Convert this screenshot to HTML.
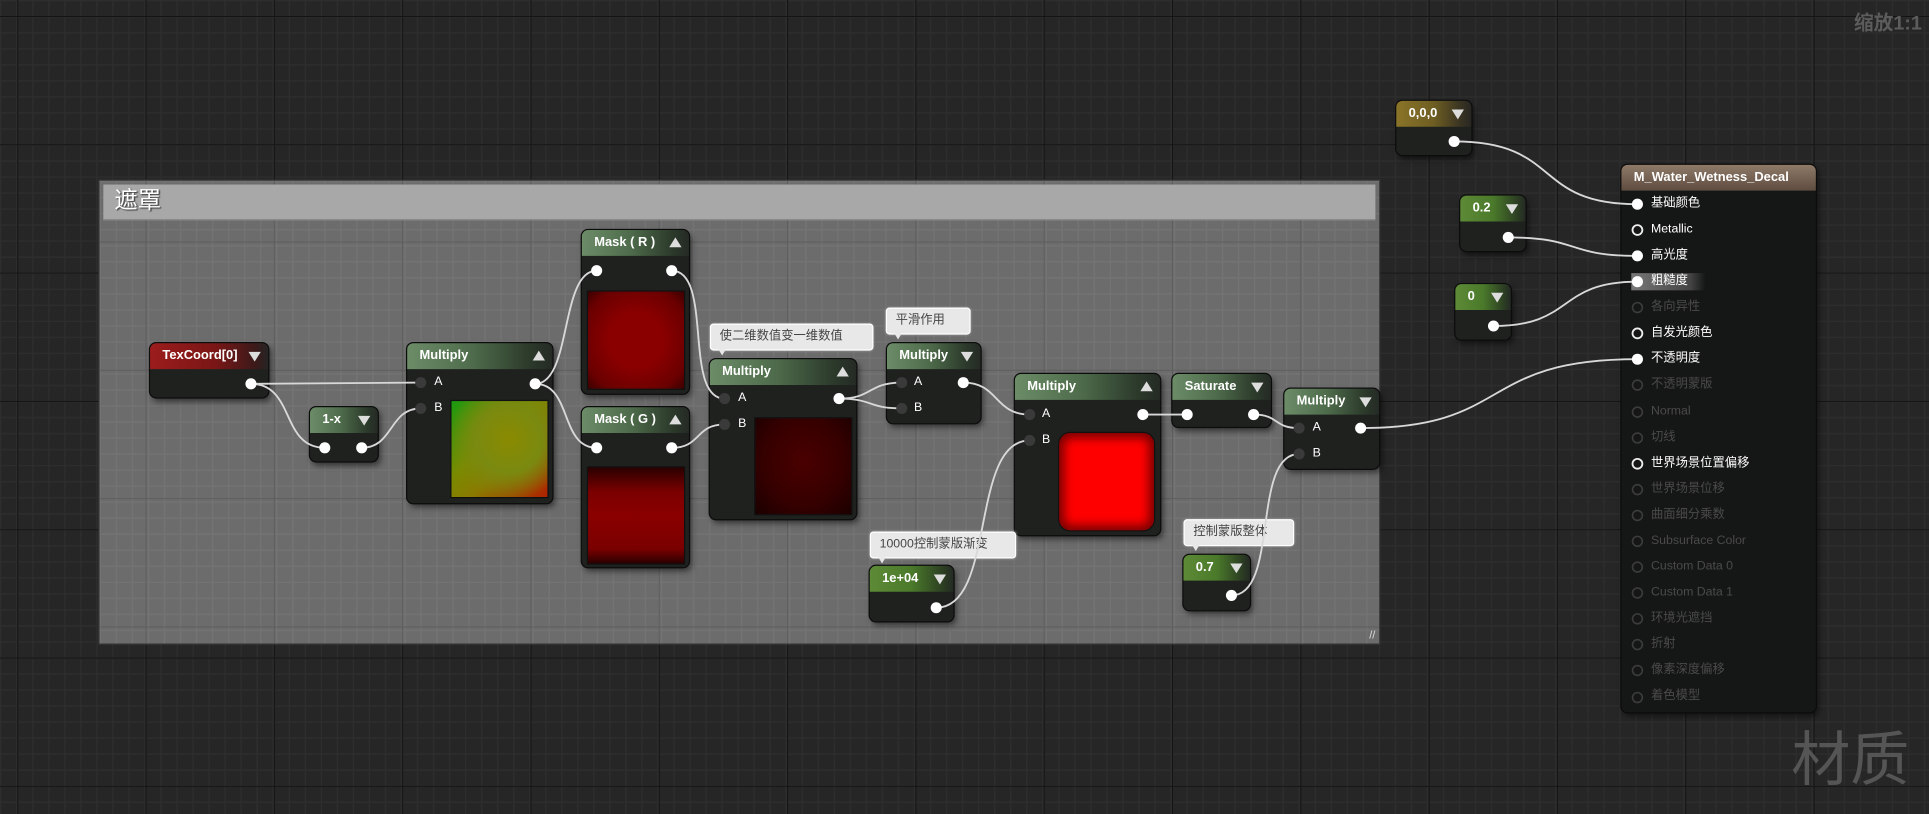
<!DOCTYPE html>
<html><head><meta charset="utf-8"><style>
html,body{margin:0;padding:0;width:1929px;height:814px;overflow:hidden;background:#262626}
#w{position:absolute;left:0;top:0;width:1568px;height:662px;transform:scale(1.230229);transform-origin:0 0;
background-color:#262626;
background-image:linear-gradient(#141414 1px,transparent 1px),linear-gradient(90deg,#141414 1px,transparent 1px),linear-gradient(#2d2d2d 1px,transparent 1px),linear-gradient(90deg,#2d2d2d 1px,transparent 1px);
background-size:104.3px 104.3px,104.3px 104.3px,13.04px 13.04px,13.04px 13.04px;
background-position:0 13px,14px 0,0 0,0 0;
font-family:"Liberation Sans","Noto Sans CJK SC",sans-serif;overflow:hidden}
.cm{position:absolute;left:81px;top:147px;width:1040px;height:376px;background-color:#6c6c6c;
background-image:linear-gradient(#5e5e5e 1px,transparent 1px),linear-gradient(90deg,#5e5e5e 1px,transparent 1px),linear-gradient(#737373 1px,transparent 1px),linear-gradient(90deg,#737373 1px,transparent 1px);
background-size:104.3px 104.3px,104.3px 104.3px,13.04px 13.04px,13.04px 13.04px;background-position:0 -55px,-67px 0,0 0,0 0;
box-shadow:0 0 0 1px #3a3a3a}
.ct{position:absolute;left:3px;top:3px;right:3px;height:28px;background:#a8a8a8;color:#fff;font-size:19px;line-height:28px;padding-left:9px;text-shadow:1px 1px 1px #333;border-bottom:1px solid #8a8a8a}
.n{position:absolute;background:#1f211f;border-radius:5px;box-shadow:0 0 0 1px #0c0c0c,2px 3px 5px rgba(0,0,0,.55)}
.h{height:21px;border-radius:5px 5px 0 0;background:linear-gradient(90deg,#6c8c68 0%,#4e6c4b 45%,#2b392a 85%,#252a25);color:#fff;font-size:10.5px;font-weight:bold;line-height:21px;padding-left:10px;position:relative;white-space:nowrap}
.h.r{background:linear-gradient(90deg,#9c1c1c,#7a1616 55%,#3a1a1a 90%,#252525)}
.h.g{background:linear-gradient(90deg,#5d8a36,#4a7a2a 50%,#2a3a22 90%,#252a25)}
.h.y{background:linear-gradient(90deg,#8a7428,#6e5e22 50%,#3a3422 85%,#272622)}
.h.m{background:linear-gradient(180deg,#8f7a68,#5e4c40);font-size:10.5px}
.tri{position:absolute;right:6px;top:7px;width:0;height:0;border-left:5px solid transparent;border-right:5px solid transparent}
.dn{border-top:8px solid #ddd}.up{border-bottom:8px solid #ddd;top:6px}
.lb{position:absolute;color:#fff;font-size:10px;line-height:12px}
.pv{position:absolute;border:1px solid #111}
.bb{position:absolute;background:#e8e8e8;border:1px solid #fff;border-radius:3px;color:#444;font-size:10px;line-height:20px;height:20px;padding-left:7px;box-shadow:0 0 2px #999;white-space:nowrap;overflow:visible}
.bb:after{content:"";position:absolute;left:6px;bottom:-5px;border-left:3px solid transparent;border-right:3px solid transparent;border-top:5px solid #e8e8e8}
.row{position:absolute;left:24px;font-size:10px;line-height:14px;height:14px;color:#fff;white-space:nowrap}
.row.d{color:#4a4a4a}
</style></head><body><div id="w">
<div class="cm"><div class="ct">遮罩</div>
<div style="position:absolute;right:3px;bottom:2px;color:#ddd;font-size:9px">//</div></div>

<div class="n" style="left:122px;top:279px;width:96px;height:44px"><div class="h r">TexCoord[0]<div class="tri dn"></div></div></div>
<div class="n" style="left:252px;top:331px;width:55px;height:44px"><div class="h">1-x<div class="tri dn"></div></div></div>
<div class="n" style="left:331px;top:279px;width:118px;height:130px"><div class="h">Multiply<div class="tri up"></div></div>
<div class="lb" style="left:22px;top:26px">A</div><div class="lb" style="left:22px;top:47px">B</div>
<div class="pv" style="left:35px;top:46px;width:78px;height:78px;background:radial-gradient(ellipse at 60% 40%,#8a8a00 0%,#7a8a10 40%,transparent 75%),linear-gradient(135deg,#1a9a10 0%,#7a8a00 40%,#8a7a00 60%,#b02000 100%)"></div></div>
<div class="n" style="left:473px;top:187px;width:87px;height:133px"><div class="h">Mask ( R )<div class="tri up"></div></div>
<div class="pv" style="left:4px;top:49px;width:78px;height:79px;background:radial-gradient(ellipse at 50% 50%,#8a0000 40%,#6a0000 80%,#3a0000 100%)"></div></div>
<div class="n" style="left:473px;top:331px;width:87px;height:130px"><div class="h">Mask ( G )<div class="tri up"></div></div>
<div class="pv" style="left:4px;top:48px;width:78px;height:78px;background:linear-gradient(180deg,#2a0000,#7a0000 25%,#8a0000 50%,#7a0000 85%,#2a0000)"></div></div>
<div class="bb" style="left:577px;top:263px;width:124px">使二维数值变一维数值</div>
<div class="n" style="left:577px;top:292px;width:119px;height:130px"><div class="h">Multiply<div class="tri up"></div></div>
<div class="lb" style="left:23px;top:26px">A</div><div class="lb" style="left:23px;top:47px">B</div>
<div class="pv" style="left:36px;top:47px;width:78px;height:78px;background:radial-gradient(ellipse at 50% 45%,#4a0000 0%,#350000 60%,#1a0000 100%)"></div></div>
<div class="bb" style="left:720px;top:250px;width:60px">平滑作用</div>
<div class="n" style="left:721px;top:279px;width:76px;height:65px"><div class="h">Multiply<div class="tri dn"></div></div>
<div class="lb" style="left:22px;top:26px">A</div><div class="lb" style="left:22px;top:47px">B</div></div>
<div class="n" style="left:825px;top:304px;width:118px;height:131px"><div class="h">Multiply<div class="tri up"></div></div>
<div class="lb" style="left:22px;top:27px">A</div><div class="lb" style="left:22px;top:48px">B</div>
<div class="pv" style="left:35px;top:47px;width:77px;height:79px;background:#ff0000;box-shadow:inset 0 0 8px 4px #700;border-radius:10px"></div></div>
<div class="n" style="left:953px;top:304px;width:80px;height:43px"><div class="h">Saturate<div class="tri dn"></div></div></div>
<div class="n" style="left:1044px;top:316px;width:77px;height:65px"><div class="h">Multiply<div class="tri dn"></div></div>
<div class="lb" style="left:23px;top:26px">A</div><div class="lb" style="left:23px;top:47px">B</div></div>
<div class="bb" style="left:707px;top:432px;width:110px">10000控制蒙版渐变</div>
<div class="n" style="left:707px;top:460px;width:68px;height:45px"><div class="h g">1e+04<div class="tri dn"></div></div></div>
<div class="bb" style="left:962px;top:422px;width:81px">控制蒙版整体</div>
<div class="n" style="left:962px;top:451px;width:54px;height:45px"><div class="h g">0.7<div class="tri dn"></div></div></div>
<div class="n" style="left:1135px;top:82px;width:61px;height:44px"><div class="h y">0,0,0<div class="tri dn"></div></div></div>
<div class="n" style="left:1187px;top:159px;width:53px;height:45px"><div class="h g">0.2<div class="tri dn"></div></div></div>
<div class="n" style="left:1183px;top:231px;width:45px;height:45px"><div class="h g">0<div class="tri dn"></div></div></div>

<div class="n" style="left:1318px;top:134px;width:158px;height:445px;background:#151716"><div class="h m">M_Water_Wetness_Decal</div>
<div style="position:absolute;left:8px;top:88px;width:60px;height:14px;background:linear-gradient(90deg,#777,#444 80%,transparent)"></div>
<div class="row" style="top:25px">基础颜色</div>
<div class="row" style="top:46px">Metallic</div>
<div class="row" style="top:67px">高光度</div>
<div class="row" style="top:88px">粗糙度</div>
<div class="row d" style="top:109px">各向异性</div>
<div class="row" style="top:130px">自发光颜色</div>
<div class="row" style="top:151px">不透明度</div>
<div class="row d" style="top:172px">不透明蒙版</div>
<div class="row d" style="top:194px">Normal</div>
<div class="row d" style="top:215px">切线</div>
<div class="row" style="top:236px">世界场景位置偏移</div>
<div class="row d" style="top:257px">世界场景位移</div>
<div class="row d" style="top:278px">曲面细分乘数</div>
<div class="row d" style="top:299px">Subsurface Color</div>
<div class="row d" style="top:320px">Custom Data 0</div>
<div class="row d" style="top:341px">Custom Data 1</div>
<div class="row d" style="top:362px">环境光遮挡</div>
<div class="row d" style="top:383px">折射</div>
<div class="row d" style="top:404px">像素深度偏移</div>
<div class="row d" style="top:425px">着色模型</div>
</div>

<svg width="1568" height="662" style="position:absolute;left:0;top:0" fill="none">
<g stroke="#d8d8d8" stroke-width="1.5">
<path d="M204 312 L342 311"/>
<path d="M204 312 C240 312,228 364,264 364"/>
<path d="M294 364 C320 364,316 332,342 332"/>
<path d="M435 312 C465 312,455 220,485 220"/>
<path d="M435 312 C465 312,455 364,485 364"/>
<path d="M546 220 C580 220,555 324,589 324"/>
<path d="M546 364 C570 364,565 345,589 345"/>
<path d="M682 324 C710 324,705 311,733 311"/>
<path d="M682 324 C710 324,705 332,733 332"/>
<path d="M783 311 C812 311,808 337,837 337"/>
<path d="M761 494 C810 494,788 358,837 358"/>
<path d="M929 337 L965 337"/>
<path d="M1019 337 C1040 337,1035 348,1056 348"/>
<path d="M1001 484 C1040 484,1017 369,1056 369"/>
<path d="M1106 348 C1230 348,1200 292,1331 292"/>
<path d="M1182 115 C1270 115,1245 166,1331 166"/>
<path d="M1226 193 C1285 193,1272 208,1331 208"/>
<path d="M1214 265 C1280 265,1265 229,1331 229"/>
</g>
<g fill="#fff">
<circle cx="204" cy="312" r="4.5"/><circle cx="264" cy="364" r="4.5"/><circle cx="294" cy="364" r="4.5"/>
<circle cx="435" cy="312" r="4.5"/><circle cx="485" cy="220" r="4.5"/><circle cx="546" cy="220" r="4.5"/>
<circle cx="485" cy="364" r="4.5"/><circle cx="546" cy="364" r="4.5"/><circle cx="682" cy="324" r="4.5"/>
<circle cx="783" cy="311" r="4.5"/><circle cx="929" cy="337" r="4.5"/><circle cx="965" cy="337" r="4.5"/>
<circle cx="1019" cy="337" r="4.5"/><circle cx="1106" cy="348" r="4.5"/><circle cx="761" cy="494" r="4.5"/>
<circle cx="1001" cy="484" r="4.5"/><circle cx="1182" cy="115" r="4.5"/><circle cx="1226" cy="193" r="4.5"/>
<circle cx="1214" cy="265" r="4.5"/>
<circle cx="1331" cy="166" r="4.5"/><circle cx="1331" cy="208" r="4.5"/><circle cx="1331" cy="229" r="4.5"/><circle cx="1331" cy="292" r="4.5"/>
</g>
<g fill="#3a3a3a">
<circle cx="342" cy="311" r="4.5"/><circle cx="342" cy="332" r="4.5"/><circle cx="589" cy="324" r="4.5"/><circle cx="589" cy="345" r="4.5"/>
<circle cx="733" cy="311" r="4.5"/><circle cx="733" cy="332" r="4.5"/><circle cx="837" cy="337" r="4.5"/><circle cx="837" cy="358" r="4.5"/>
<circle cx="1056" cy="348" r="4.5"/><circle cx="1056" cy="369" r="4.5"/>
</g>
<g stroke="#eee" stroke-width="1.5"><circle cx="1331" cy="187" r="4"/><circle cx="1331" cy="271" r="4"/><circle cx="1331" cy="377" r="4"/></g>
<g stroke="#3c3c3c" stroke-width="1.3">
<circle cx="1331" cy="250" r="4"/><circle cx="1331" cy="313" r="4"/><circle cx="1331" cy="335" r="4"/><circle cx="1331" cy="356" r="4"/>
<circle cx="1331" cy="398" r="4"/><circle cx="1331" cy="419" r="4"/><circle cx="1331" cy="440" r="4"/><circle cx="1331" cy="461" r="4"/>
<circle cx="1331" cy="482" r="4"/><circle cx="1331" cy="503" r="4"/><circle cx="1331" cy="524" r="4"/><circle cx="1331" cy="545" r="4"/><circle cx="1331" cy="567" r="4"/>
</g>
</svg>
<div style="position:absolute;left:1507px;top:5px;color:#5c5c5c;font-size:16px;font-weight:bold">缩放1:1</div>
<div style="position:absolute;left:1456px;top:588px;color:#555;font-size:48px;line-height:62px">材质</div>
</div></body></html>
